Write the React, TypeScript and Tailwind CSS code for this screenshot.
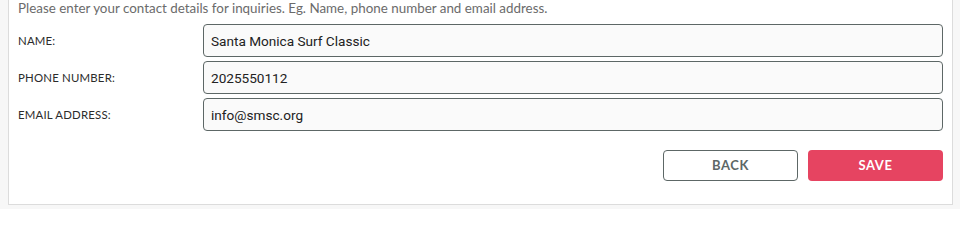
const fields = [
  { label: 'Name:', value: 'Santa Monica Surf Classic' },
  { label: 'Phone Number:', value: '2025550112' },
  { label: 'Email Address:', value: 'info@smsc.org' },
]

export default function App() {
  return (
    <div className="h-[209px] bg-[#f7f7f7] pl-2 pr-2 font-['Lato',sans-serif] overflow-hidden">
      <div className="w-[945px] h-[205px] bg-white border-x border-b border-[#dcdcdc] px-[9px] pt-[1px]">
        <p className="text-[13.4px] leading-[14px] text-[#6b6b6b]">
          Please enter your contact details for inquiries. Eg. Name, phone number and email address.
        </p>
        <div className="mt-[9px] flex flex-col gap-[4px]">
          {fields.map((f) => (
            <div key={f.label} className="flex items-center">
              <label className="w-[185px] text-[11.4px] uppercase text-[#2b2b2b] tracking-[0.2px]">
                {f.label}
              </label>
              <input
                defaultValue={f.value}
                className="w-[740px] h-[33px] rounded-[4px] border border-[#5d6766] bg-[#fafafa] px-[7px] font-['Roboto',sans-serif] text-[13.6px] text-[#222] outline-none"
              />
            </div>
          ))}
        </div>
        <div className="mt-[19px] flex justify-end gap-[10px]">
          <button className="w-[135px] h-[31px] rounded-[4px] border border-[#5d6766] bg-white text-[13px] font-bold tracking-[0.6px] text-[#5d6766]">
            BACK
          </button>
          <button className="w-[135px] h-[31px] rounded-[4px] bg-[#e64461] text-[13px] font-bold tracking-[0.6px] text-white">
            SAVE
          </button>
        </div>
      </div>
    </div>
  )
}
